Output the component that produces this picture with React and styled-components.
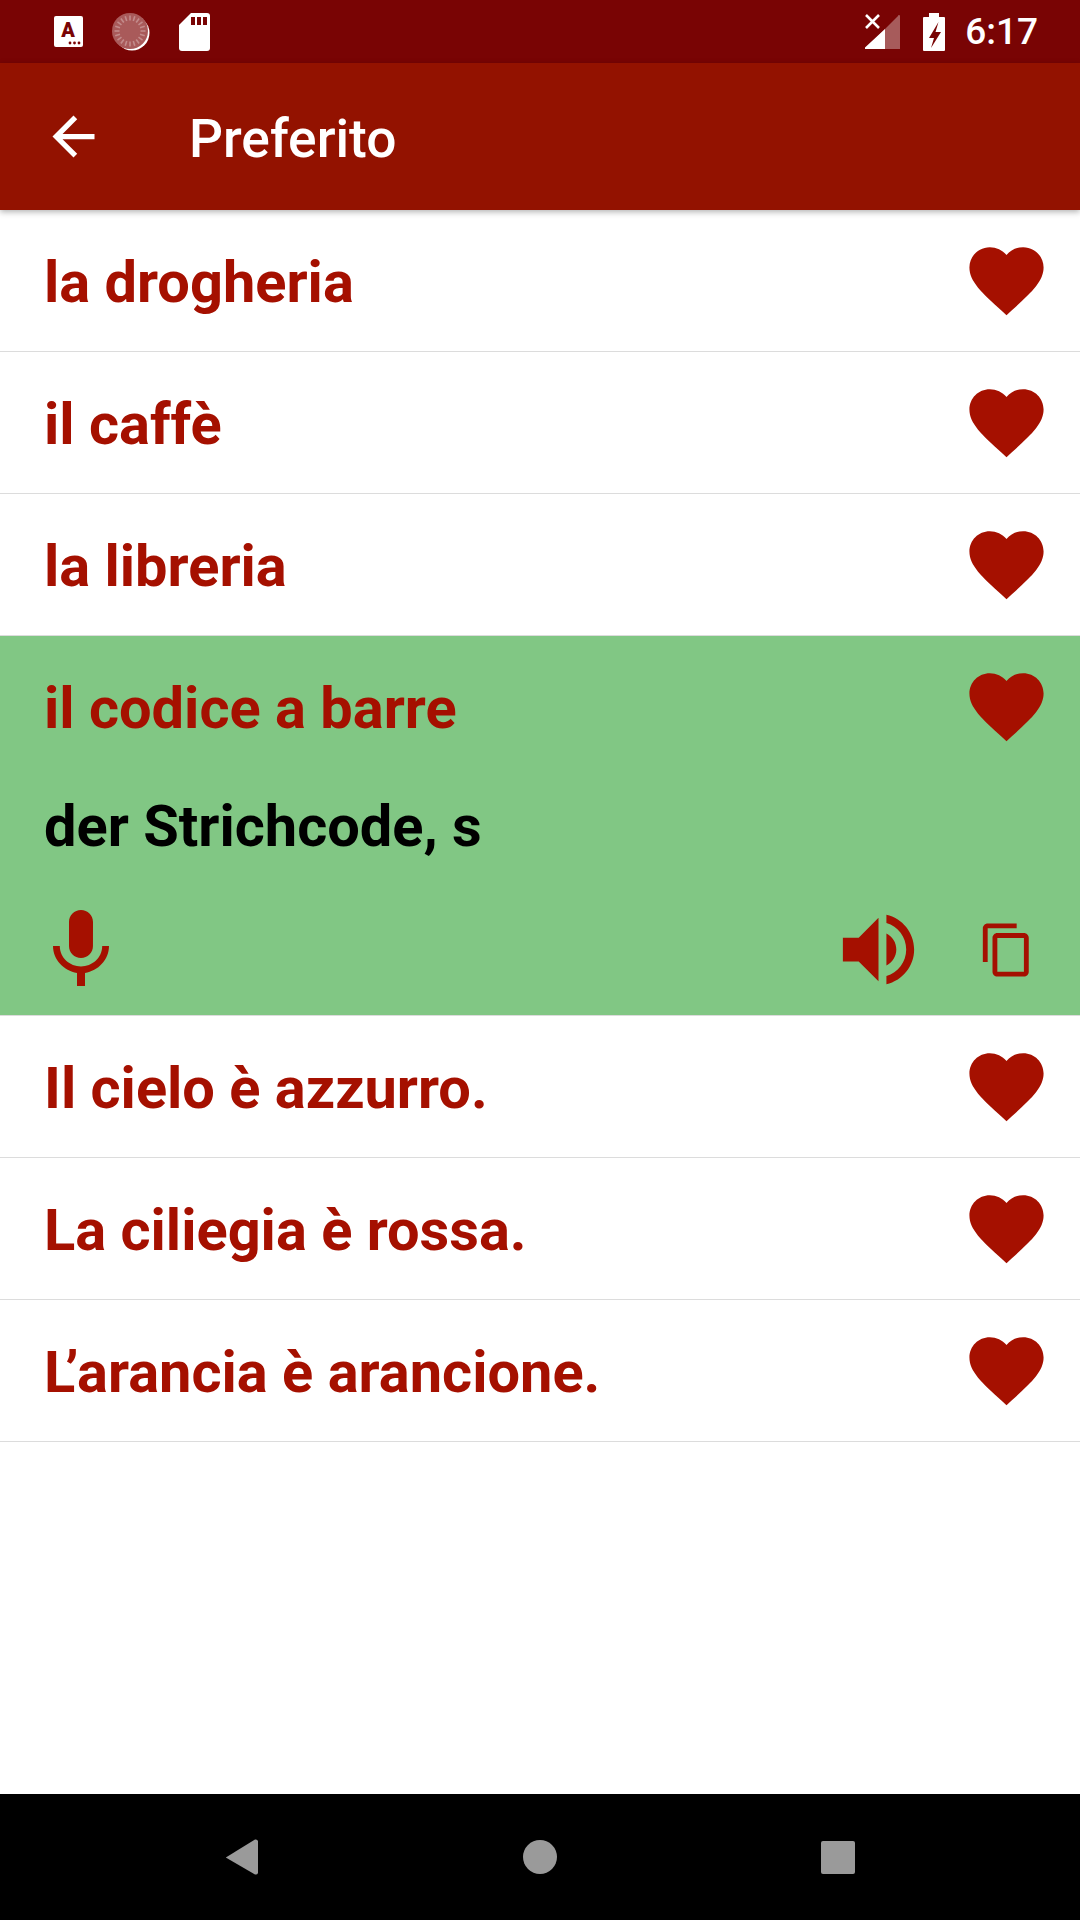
import React from 'react';
import styled, { createGlobalStyle } from 'styled-components';

const RED = '#a51000';

const GlobalStyle = createGlobalStyle`
  html, body {
    margin: 0;
    padding: 0;
    background: #ffffff;
    font-family: Roboto, "Liberation Sans", sans-serif;
  }
`;

const Screen = styled.div`
  width: 1080px;
  height: 1920px;
  display: flex;
  flex-direction: column;
  overflow: hidden;
  background: #ffffff;
`;

const StatusBar = styled.div`
  height: 63px;
  flex: none;
  display: flex;
  align-items: center;
  padding: 0 42px 0 54px;
  background: #790404;
  color: #ffffff;
`;

const StatusLeft = styled.div`
  display: flex;
  align-items: center;
  gap: 29px;
  flex: 1;
`;

const StatusRight = styled.div`
  display: flex;
  align-items: center;
`;

const Clock = styled.span`
  margin-left: 20px;
  font-size: 37px;
  font-weight: 500;
  line-height: 63px;
`;

const AppBar = styled.header`
  height: 147px;
  flex: none;
  display: flex;
  align-items: center;
  padding-left: 42px;
  background: #931200;
  box-shadow: 0 2px 6px rgba(0, 0, 0, 0.3);
  position: relative;
  z-index: 1;
`;

const Title = styled.h1`
  margin: 5px 0 0 84px;
  font-size: 53.3px;
  font-weight: 500;
  color: #ffffff;
`;

const List = styled.div`
  flex: 1;
`;

const Row = styled.div`
  border-bottom: 1px solid #dcdcdc;
  background: ${(p) => (p.$open ? '#81c784' : '#ffffff')};
`;

const RowHead = styled.div`
  height: 141px;
  display: flex;
  align-items: center;
  justify-content: space-between;
  padding: 0 29px 0 44px;
`;

const Phrase = styled.span`
  margin-top: 3px;
  font-size: 57.75px;
  font-weight: 700;
  color: ${RED};
`;

// the device kerns L and the apostrophe much tighter than the browser does
const KernedLead = styled.span`
  letter-spacing: -10px;
`;

const Translation = styled.div`
  padding-left: 44px;
  height: 94px;
  margin-top: 2px;
  margin-bottom: -2px;
  font-size: 57.75px;
  font-weight: 700;
  line-height: 94px;
  color: #000000;
`;

const Actions = styled.div`
  height: 138px;
  padding-top: 6px;
  display: flex;
  align-items: center;
  padding-left: 33px;
  padding-right: 44px;
`;

const Spacer = styled.div`
  flex: 1;
`;

const ActionIcon = styled.svg`
  display: block;
  fill: ${RED};
  width: ${(p) => p.$size}px;
  height: ${(p) => p.$size}px;
  margin-left: ${(p) => p.$gap || 0}px;
  margin-top: ${(p) => p.$drop || 0}px;
`;

const HeartIcon = styled.svg`
  display: block;
  width: 89px;
  height: 89px;
  fill: ${RED};
`;

const BackIcon = styled.svg`
  display: block;
  width: 63px;
  height: 63px;
  fill: #ffffff;
`;

const NavBar = styled.nav`
  height: 126px;
  flex: none;
  display: flex;
  align-items: center;
  justify-content: center;
  gap: 264px;
  background: #000000;
`;

const NavBack = styled.svg`
  display: block;
  width: 34px;
  height: 36px;
  fill: #9a9a9a;
`;

const NavHome = styled.div`
  width: 34px;
  height: 34px;
  border-radius: 50%;
  background: #9a9a9a;
`;

const NavRecent = styled.div`
  width: 34px;
  height: 33px;
  border-radius: 2px;
  background: #9a9a9a;
`;

const SignalSvg = styled.svg`
  display: block;
  margin-right: 23px;
`;

const Heart = () => (
  <HeartIcon viewBox="0 0 24 24">
    <path d="M12 21.35l-1.45-1.32C5.4 15.36 2 12.28 2 8.5 2 5.42 4.42 3 7.5 3c1.74 0 3.41.81 4.5 2.09C13.09 3.81 14.76 3 16.5 3 19.58 3 22 5.42 22 8.5c0 3.78-3.4 6.86-8.55 11.54L12 21.35z" />
  </HeartIcon>
);

const AccessIcon = () => (
  <svg width="29" height="31" viewBox="0 0 29 31">
    <rect width="29" height="31" rx="2" fill="#fff" />
    <text x="14" y="21" textAnchor="middle" fontFamily="Roboto" fontWeight="900" fontSize="20" fill="#790404">A</text>
    <circle cx="16" cy="27" r="1.4" fill="#790404" />
    <circle cx="20.5" cy="27" r="1.4" fill="#790404" />
    <circle cx="25" cy="27" r="1.4" fill="#790404" />
  </svg>
);

const DiscIcon = () => {
  const ticks = [];
  for (let i = 0; i < 20; i++) {
    ticks.push(<line key={i} x1="18" y1="2.5" x2="18" y2="7.5" stroke="#fff" strokeOpacity="0.3" strokeWidth="1.6" transform={`rotate(${i * 18} 18 18)`} />);
  }
  return (
    <svg width="38" height="38" viewBox="0 0 38 38">
      <circle cx="20" cy="20" r="17.5" fill="#fff" />
      <circle cx="18" cy="18" r="18" fill="#a95a5a" />
      {ticks}
    </svg>
  );
};

const SdIcon = () => (
  <svg width="31" height="38" viewBox="0 0 31 38">
    <path d="M12 0H28a3 3 0 0 1 3 3V35a3 3 0 0 1-3 3H3a3 3 0 0 1-3-3V12z" fill="#fff" />
    <rect x="12" y="4" width="4" height="8" fill="#790404" />
    <rect x="18" y="4" width="4" height="8" fill="#790404" />
    <rect x="24" y="4" width="4" height="8" fill="#790404" />
  </svg>
);

const SignalIcon = () => (
  <SignalSvg width="35" height="35" viewBox="0 0 35 35">
    <path d="M0 35L33 2a1 1 0 0 1 2 0V35z" fill="#fff" fillOpacity="0.35" />
    <path d="M0 33.5L20 15V35H1.5a1 1 0 0 1-1.5-1.5z" fill="#fff" />
    <path d="M1 1L14 14M14 1L1 14" stroke="#fff" strokeWidth="2.6" fill="none" />
  </SignalSvg>
);

const BatteryIcon = () => (
  <svg width="22" height="38" viewBox="0 0 22 38">
    <path d="M6 0H16V4H21a1 1 0 0 1 1 1V37a1 1 0 0 1-1 1H1a1 1 0 0 1-1-1V5a1 1 0 0 1 1-1H6z" fill="#fff" />
    <path d="M15.5 9L6 25H11L8 35L18 19H12.5z" fill="#790404" />
  </svg>
);

const items = [
  { text: 'la drogheria' },
  { text: 'il caffè' },
  { text: 'la libreria' },
  { text: 'il codice a barre', translation: 'der Strichcode, s' },
  { text: 'Il cielo è azzurro.' },
  { text: 'La ciliegia è rossa.' },
  { lead: 'L', text: '’arancia è arancione.' },
];

export default function App() {
  return (
    <Screen>
      <GlobalStyle />
      <StatusBar>
        <StatusLeft>
          <AccessIcon />
          <DiscIcon />
          <SdIcon />
        </StatusLeft>
        <StatusRight>
          <SignalIcon />
          <BatteryIcon />
          <Clock>6:17</Clock>
        </StatusRight>
      </StatusBar>
      <AppBar>
        <BackIcon viewBox="0 0 24 24">
          <path d="M20 11H7.83l5.59-5.59L12 4l-8 8 8 8 1.41-1.41L7.83 13H20v-2z" />
        </BackIcon>
        <Title>Preferito</Title>
      </AppBar>
      <List>
        {items.map((item) => (
          <Row key={item.text} $open={!!item.translation}>
            <RowHead>
              <Phrase>
                {item.lead && <KernedLead>{item.lead}</KernedLead>}
                {item.text}
              </Phrase>
              <Heart />
            </RowHead>
            {item.translation && (
              <>
                <Translation>{item.translation}</Translation>
                <Actions>
                  <ActionIcon $size={96} viewBox="0 0 24 24">
                    <path d="M12 15c1.66 0 2.99-1.34 2.99-3L15 6c0-1.66-1.34-3-3-3S9 4.34 9 6v6c0 1.66 1.34 3 3 3zm5.3-3c0 3-2.54 5.1-5.3 5.1S6.7 15 6.7 12H5c0 3.42 2.72 6.23 6 6.72V22h2v-3.28c3.28-.48 6-3.3 6-6.72h-1.7z" />
                  </ActionIcon>
                  <Spacer />
                  <ActionIcon $size={95} $drop={7} viewBox="0 0 24 24">
                    <path d="M3 9v6h4l5 5V4L7 9H3zm13.5 3c0-1.77-1.02-3.29-2.5-4.03v8.05c1.48-.73 2.5-2.25 2.5-4.02zM14 3.23v2.06c2.89.86 5 3.54 5 6.71s-2.11 5.85-5 6.71v2.06c4.01-.91 7-4.49 7-8.77s-2.99-7.86-7-8.77z" />
                  </ActionIcon>
                  <ActionIcon $size={58} $gap={52} $drop={7} viewBox="0 0 24 24">
                    <path d="M16 1H4c-1.1 0-2 .9-2 2v14h2V3h12V1zm3 4H8c-1.1 0-2 .9-2 2v14c0 1.1.9 2 2 2h11c1.1 0 2-.9 2-2V7c0-1.1-.9-2-2-2zm0 16H8V7h11v14z" />
                  </ActionIcon>
                </Actions>
              </>
            )}
          </Row>
        ))}
      </List>
      <NavBar>
        <NavBack viewBox="0 0 34 36">
          <path d="M0.8 18.5L30 0.6a2.5 2.5 0 0 1 3 1.4V34a2.5 2.5 0 0 1-3 1.4L0.8 18.5z" />
        </NavBack>
        <NavHome />
        <NavRecent />
      </NavBar>
    </Screen>
  );
}
